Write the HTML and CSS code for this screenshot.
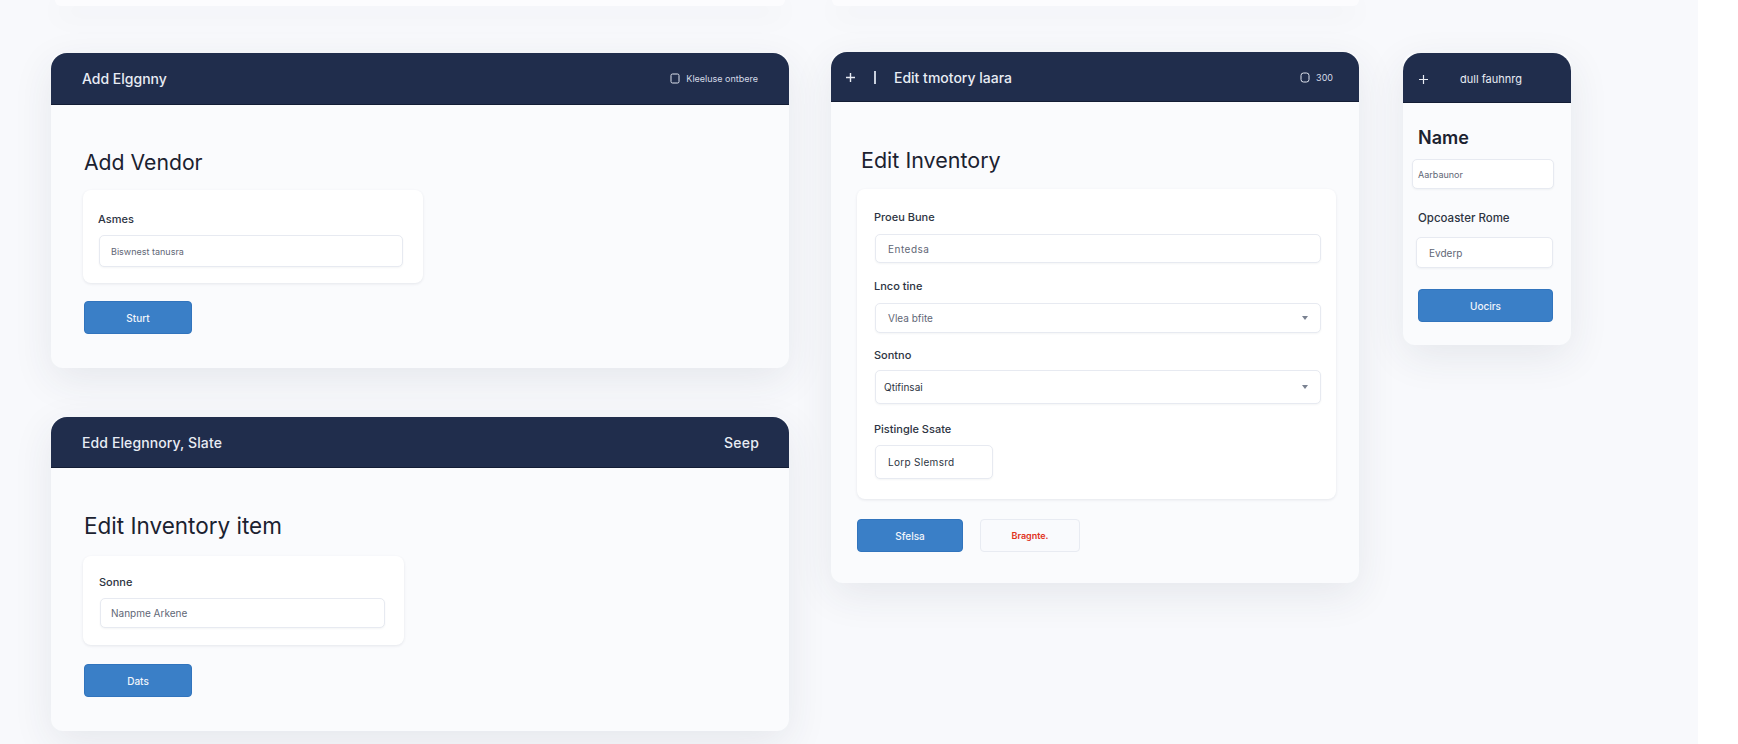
FILE: index.html
```html
<!DOCTYPE html>
<html lang="en">
<head>
  <meta charset="UTF-8" />
  <meta name="viewport" content="width=device-width, initial-scale=1.0" />
  <title>Inventory Forms</title>

  <link rel="stylesheet" href="styles.css">
</head>
<body>
<main class="board">

  <!-- Left column: two wide forms -->
  <section class="column column-wide">
    <div class="stub stub-wide"></div>

    <article class="card vendor-card">
      <header class="card-header">
        <span class="header-title">Add Elggnny</span>
        <span class="header-note">
          <svg class="note-icon" width="10" height="11" viewBox="0 0 10 11"><rect x="1" y="1" width="8" height="9" rx="1.5" fill="none" stroke="#dfe4ee" stroke-width="1"/></svg>
          Kleeluse ontbere
        </span>
      </header>
      <div class="card-body">
        <h2>Add Vendor</h2>
        <div class="panel">
          <label>Asmes</label>
          <div class="field">Biswnest tanusra</div>
        </div>
        <button type="button" class="btn btn-primary">Sturt</button>
      </div>
    </article>

    <article class="card item-card">
      <header class="card-header">
        <span class="header-title">Edd Elegnnory, Slate</span>
        <span class="header-action">Seep</span>
      </header>
      <div class="card-body">
        <h2>Edit Inventory item</h2>
        <div class="panel">
          <label>Sonne</label>
          <div class="field">Nanpme Arkene</div>
        </div>
        <button type="button" class="btn btn-primary">Dats</button>
      </div>
    </article>
  </section>

  <!-- Middle column: full inventory form -->
  <section class="column column-mid">
    <div class="stub stub-mid"></div>

    <article class="card inventory-card">
      <header class="card-header">
        <span class="header-left">
          <svg class="plus-icon" width="11" height="11" viewBox="0 0 11 11"><path d="M5.5 1v9M1 5.5h9" stroke="#e8ecf4" stroke-width="1.4" fill="none"/></svg>
          <span class="header-bar"></span>
          <span class="header-title">Edit tmotory laara</span>
        </span>
        <span class="header-note">
          <svg class="note-icon" width="10" height="11" viewBox="0 0 10 11"><rect x="1" y="1" width="8" height="9" rx="2.5" fill="none" stroke="#dfe4ee" stroke-width="1"/></svg>
          300
        </span>
      </header>
      <div class="card-body">
        <h2>Edit Inventory</h2>
        <div class="panel">
          <label>Proeu Bune</label>
          <div class="field field-name">Entedsa</div>
          <label>Lnco tine</label>
          <div class="field field-select field-location">Vlea bfite <span class="caret"></span></div>
          <label>Sontno</label>
          <div class="field field-select field-sort">Qtifinsai <span class="caret"></span></div>
          <label>Pistingle Ssate</label>
          <div class="field field-short">Lorp Slemsrd</div>
        </div>
        <div class="actions">
          <button type="button" class="btn btn-primary">Sfelsa</button>
          <button type="button" class="btn btn-ghost">Bragnte.</button>
        </div>
      </div>
    </article>
  </section>

  <!-- Right column: narrow mobile form -->
  <section class="column column-narrow">
    <article class="card mobile-card">
      <header class="card-header">
        <svg class="plus-icon" width="11" height="11" viewBox="0 0 11 11"><path d="M5.5 1v9M1 5.5h9" stroke="#e8ecf4" stroke-width="1.2" fill="none"/></svg>
        <span class="header-title">dull fauhnrg</span>
      </header>
      <div class="card-body">
        <h2>Name</h2>
        <div class="field field-first">Aarbaunor</div>
        <label>Opcoaster Rome</label>
        <div class="field field-second">Evderp</div>
        <button type="button" class="btn btn-primary">Uocirs</button>
      </div>
    </article>
  </section>

</main>
</body>
</html>
```

FILE: styles.css
```css
body {
  font-family: Inter, "Liberation Sans", sans-serif;
  background-color: #fff;
  margin: 0;
  padding: 0;
  height: 744px;
  overflow: hidden;
}

.board {
  width: 1698px;
  height: 744px;
  display: flex;
  background-color: #f8f9fc;
  overflow: hidden;
}

.column {
  display: flex;
  flex-direction: column;
  flex-shrink: 0;
}

.column-wide {
  width: 738px;
  margin-left: 51px;
  margin-right: 42px;
  gap: 47px;
}

.column-mid {
  width: 528px;
  margin-right: 44px;
  gap: 46px;
}

.column-narrow {
  width: 168px;
  padding-top: 53px;
}

.stub {
  height: 6px;
  background-color: #fcfcfe;
  border-radius: 0 0 8px 8px;
  box-shadow: 0 8px 28px rgba(40, 50, 80, 0.08);
}

.stub-wide {
  margin: 0 4px;
}

.stub-mid {
  margin-left: 1px;
}

.card {
  background-color: #fafbfd;
  border-radius: 12px;
  box-shadow: 0 12px 40px rgba(40, 50, 80, 0.09);
}

.card-header {
  display: flex;
  align-items: center;
  justify-content: space-between;
  box-sizing: border-box;
  height: 52px;
  padding: 0 30px 0 31px;
  background-color: #202d4c;
  border-bottom: 1px solid #131d35;
  border-radius: 16px 16px 0 0;
  color: #e8ecf4;
}

.header-title {
  font-size: 14px;
  font-weight: 500;
}

.header-note {
  display: flex;
  align-items: center;
  gap: 6px;
  margin-right: 1px;
  font-size: 9px;
  color: #d5dbe7;
}

.header-action {
  font-size: 14px;
  font-weight: 500;
  letter-spacing: 0.2px;
}

.header-left {
  display: flex;
  align-items: center;
}

.header-bar {
  width: 2px;
  height: 13px;
  margin: 0 18px 0 18px;
  background-color: #c9d0dd;
}

.card-body {
  padding: 43px 32px 34px 33px;
}

h2 {
  margin: 0 0 14px;
  font-size: 21px;
  line-height: 28px;
  font-weight: 400;
  color: #1b2230;
}

.panel {
  box-sizing: border-box;
  background-color: #fff;
  border-radius: 8px;
  box-shadow: 0 1px 3px rgba(40, 50, 80, 0.1);
}

label {
  display: block;
  font-size: 11px;
  line-height: 14px;
  font-weight: 500;
  color: #2d3442;
}

.field {
  display: flex;
  align-items: center;
  justify-content: space-between;
  box-sizing: border-box;
  height: 30px;
  padding: 0 12px;
  background-color: #fff;
  border: 1px solid #e7eaf1;
  border-radius: 5px;
  box-shadow: 0 1px 2px rgba(40, 50, 80, 0.05);
  font-size: 10px;
  color: #5f6776;
}

.caret {
  width: 0;
  height: 0;
  border-left: 3px solid transparent;
  border-right: 3px solid transparent;
  border-top: 4px solid #7a8291;
}

.btn {
  display: block;
  height: 33px;
  padding: 0;
  border-radius: 4px;
  font-family: inherit;
  font-size: 10px;
  font-weight: 500;
  cursor: pointer;
}

.btn-primary {
  width: 108px;
  background-color: #3a7fc7;
  border: 1px solid #3174bd;
  color: #f1f5fb;
}

.btn-ghost {
  width: 100px;
  background-color: #f9fafd;
  border: 1px solid #e8ebf2;
  font-size: 9px;
  font-weight: 600;
  color: #e0321c;
}

/* Add Vendor */
.vendor-card h2 {
  font-size: 21.2px;
}

.vendor-card .panel {
  width: 340px;
  margin-left: -1px;
  padding: 22px 20px 16px 15px;
}

.vendor-card .field {
  height: 32px;
  margin: 9px 0 0 1px;
  padding-left: 11px;
  font-size: 9px;
}

.vendor-card .btn {
  margin-top: 18px;
}

/* Edit Inventory item */
.item-card {
  margin-top: 2px;
}

.item-card .card-header {
  height: 51px;
}

.item-card .header-title {
  letter-spacing: 0.1px;
}

.item-card .card-body {
  padding-top: 44px;
}

.item-card h2 {
  margin-bottom: 16px;
  font-size: 22.5px;
}

.item-card .panel {
  width: 321px;
  margin-left: -1px;
  padding: 19px 19px 17px 16px;
}

.item-card .field {
  margin: 9px 0 0 1px;
  padding-left: 10px;
}

.item-card .btn {
  margin-top: 19px;
}

/* Edit Inventory */
.inventory-card .card-header {
  height: 50px;
  padding: 2px 25px 0 14px;
}

.inventory-card .card-body {
  padding: 44px 23px 31px 26px;
}

.inventory-card h2 {
  margin: 0 0 15px 4px;
  font-size: 21.5px;
}

.inventory-card .panel {
  padding: 21px 15px 20px 17px;
}

.inventory-card .field {
  margin-left: 1px;
}

.field-name {
  height: 29px;
  margin: 10px 0 16px;
  letter-spacing: 0.5px;
}

.field-location {
  margin: 10px 0 15px;
}

.field-sort {
  height: 34px;
  margin: 8px 0 18px;
  color: #2d3442;
}

.inventory-card .field-sort {
  padding-left: 8px;
}

.field-short {
  width: 118px;
  height: 34px;
  margin-top: 9px;
  letter-spacing: 0.3px;
  color: #2d3442;
}

.actions {
  display: flex;
  gap: 17px;
  margin-top: 20px;
}

.actions .btn-primary {
  width: 106px;
}

/* Mobile form */
.mobile-card .card-header {
  height: 50px;
  justify-content: flex-start;
  padding: 3px 15px 0;
  border-radius: 18px 18px 0 0;
  gap: 31px;
}

.mobile-card .header-title {
  font-size: 11px;
  font-weight: 400;
}

.mobile-card .card-body {
  padding: 23px 18px 23px 15px;
}

.mobile-card h2 {
  margin: 0 0 9px;
  font-size: 18px;
  line-height: 24px;
  font-weight: 600;
}

.mobile-card label {
  margin-top: 22px;
  font-size: 11.5px;
  font-weight: 500;
}

.field-first {
  width: 142px;
  margin-left: -6px;
  padding-left: 5px;
  font-size: 9px;
}

.field-second {
  width: 137px;
  height: 31px;
  margin: 12px 0 0 -2px;
}

.mobile-card .btn {
  width: 135px;
  margin-top: 21px;
}
```
